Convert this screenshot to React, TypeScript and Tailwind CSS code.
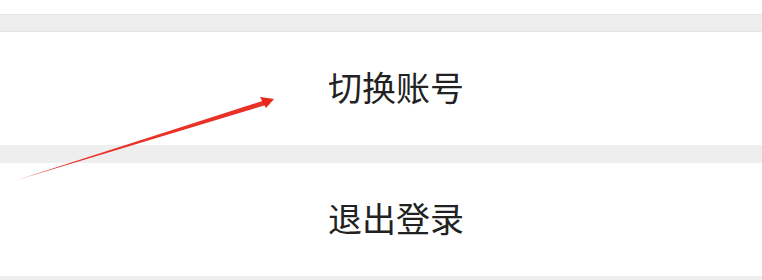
import React from 'react';

const Arrow: React.FC = () => (
  <svg
    className="pointer-events-none absolute left-0 top-0"
    width="762"
    height="280"
    viewBox="0 0 762 280"
  >
    {/* tapered shaft */}
    <polygon points="17,180 264,100.5 266,105 " fill="#e8261c" opacity="0.95" />
    <polygon points="274,99 260,97 266,108" fill="#e8261c" />
  </svg>
);

const Row: React.FC<{ label: string }> = ({ label }) => (
  <div className="flex h-[113px] items-center justify-center bg-white pl-[30px]">
    <span
      className="-mt-[3px] text-[34px] leading-none text-[#222222]"
      style={{ fontFamily: '"Noto Sans CJK SC", sans-serif' }}
    >
      {label}
    </span>
  </div>
);

export default function App() {
  return (
    <div className="relative h-[280px] w-[762px] overflow-hidden bg-white">
      <div className="h-[14px] bg-white" />
      <div className="h-[18px] border-y border-[#e4e4e4] bg-[#eeeeee]" />
      <Row label="切换账号" />
      <div className="h-[18px] bg-[#eeeeee]" />
      <Row label="退出登录" />
      <div className="h-[10px] bg-[#eeeeee]" />
      <Arrow />
    </div>
  );
}
